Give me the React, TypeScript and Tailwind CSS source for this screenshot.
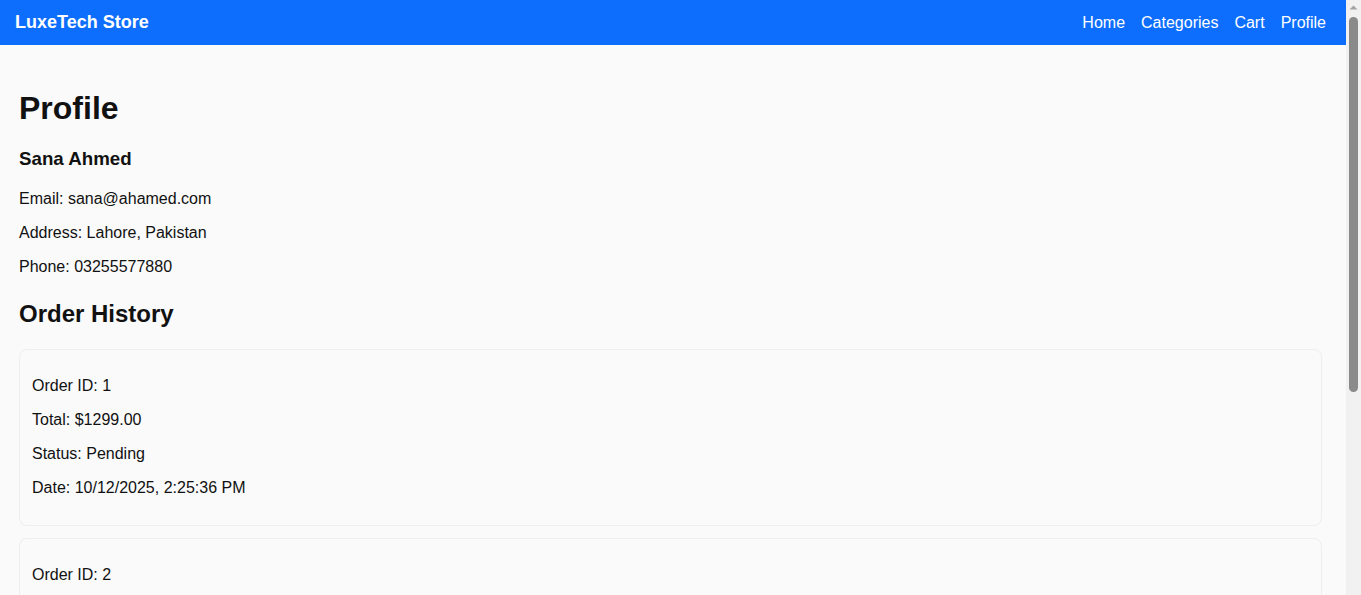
const orders = [
  { id: 1, total: "$1299.00", status: "Pending", date: "10/12/2025, 2:25:36 PM" },
  { id: 2, total: "$849.00", status: "Pending", date: "10/12/2025, 2:31:02 PM" },
  { id: 3, total: "$199.00", status: "Delivered", date: "10/12/2025, 2:40:18 PM" },
];

function Navbar() {
  return (
    <nav className="flex h-[45px] items-center justify-between bg-[#0d6efd] pl-[15px] pr-[20px] text-white">
      <div className="text-[18px] font-bold">LuxeTech Store</div>
      <div className="flex gap-[16px] text-[16px]">
        <a href="#">Home</a>
        <a href="#">Categories</a>
        <a href="#">Cart</a>
        <a href="#">Profile</a>
      </div>
    </nav>
  );
}

// the browser's scrollbar, as it shows in the screenshot
function Scrollbar() {
  return (
    <div className="flex w-[15px] shrink-0 flex-col items-center bg-[#f1f1f1]">
      <svg width="15" height="15" viewBox="0 0 15 15" className="shrink-0">
        <path d="M3.5 9.5 L7.5 5.5 L11.5 9.5 Z" fill="#a3a3a3" />
      </svg>
      <div className="mt-[2px] h-[375px] w-[9px] rounded-full bg-[#8a8a8a]" />
    </div>
  );
}

export default function App() {
  return (
    <div className="flex h-screen overflow-hidden bg-[#fafafa] font-['Liberation_Sans',Arial,sans-serif] text-[#111]">
      <div className="min-w-0 flex-1">
        <Navbar />
        <main className="pl-[19px] pr-[24px] pt-[20px] pb-[20px]">
          <h1 className="mt-[25px] mb-[21px] text-[32px] leading-[37px] font-bold">Profile</h1>
          <h3 className="mb-[20px] text-[18.72px] leading-[22px] font-bold">Sana Ahmed</h3>
          <p className="my-[16px] leading-[18px]">Email: sana@ahamed.com</p>
          <p className="my-[16px] leading-[18px]">Address: Lahore, Pakistan</p>
          <p className="mt-[16px] leading-[18px]">Phone: 03255577880</p>
          <h2 className="mt-[24px] mb-[21px] text-[24px] leading-[28px] font-bold">Order History</h2>
          <div className="flex flex-col gap-[12px]">
            {orders.map((o) => (
              <div key={o.id} className="rounded-[8px] border border-[#eeeeee] bg-[#fafafa] px-[12px] pt-[11px] pb-[12px]">
                <p className="my-[16px] leading-[18px]">Order ID: {o.id}</p>
                <p className="my-[16px] leading-[18px]">Total: {o.total}</p>
                <p className="my-[16px] leading-[18px]">Status: {o.status}</p>
                <p className="my-[16px] leading-[18px]">Date: {o.date}</p>
              </div>
            ))}
          </div>
        </main>
      </div>
      <Scrollbar />
    </div>
  );
}
